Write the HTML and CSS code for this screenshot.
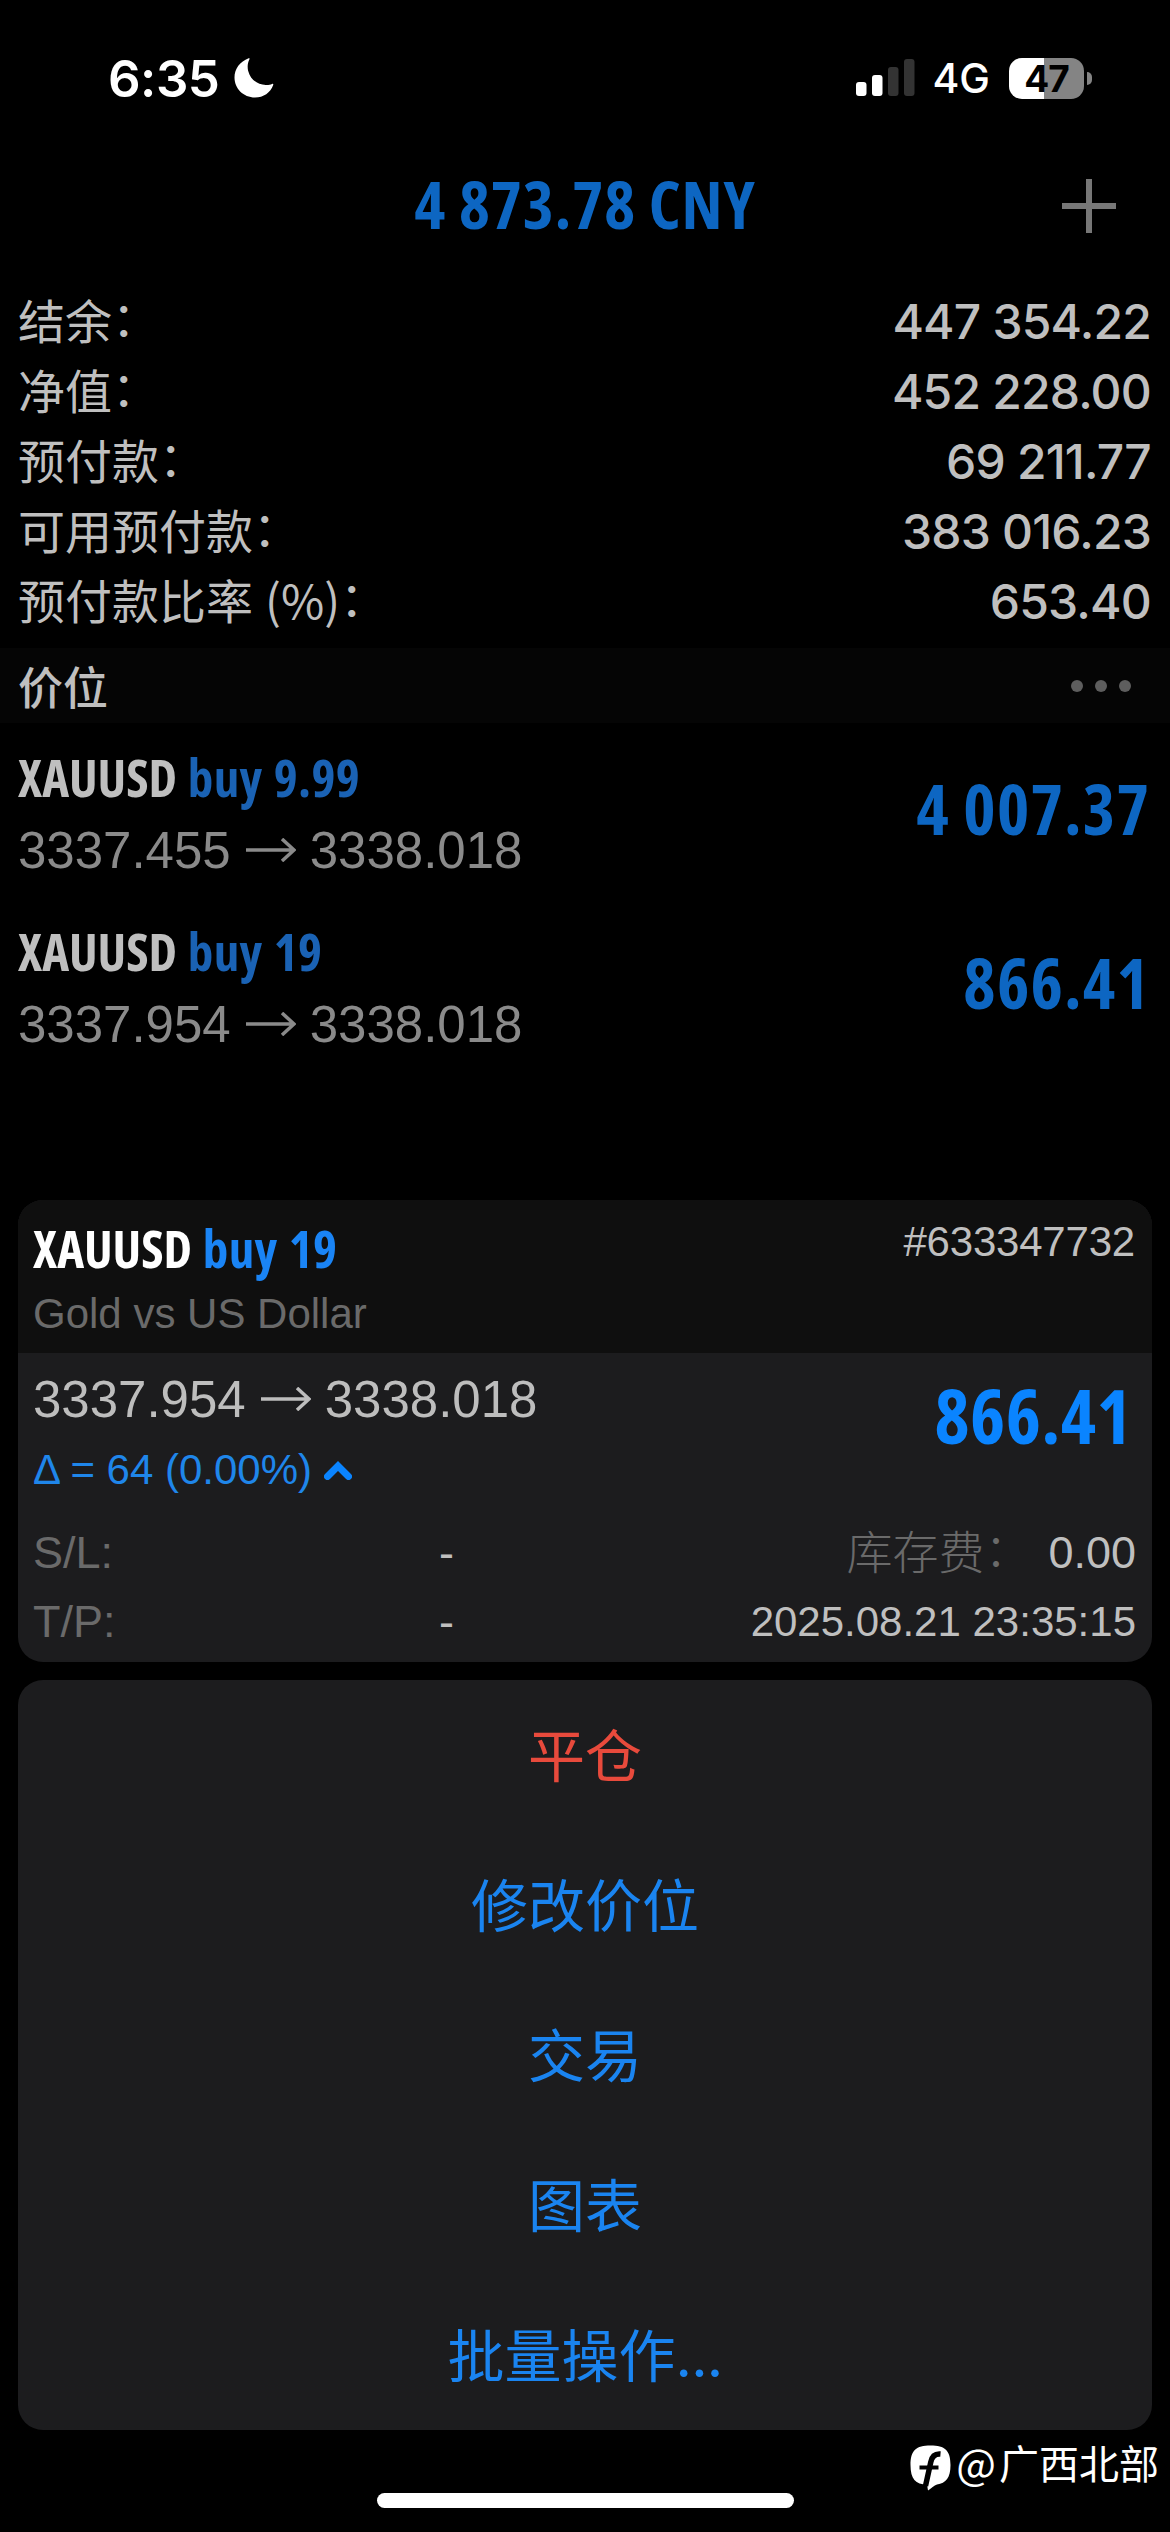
FILE: index.html
```html
<!DOCTYPE html>
<html lang="zh-CN">
<head>
<meta charset="utf-8">
<title>价位</title>
<link rel="stylesheet" href="styles.css">
</head>
<body>
<header class="status">
  <div class="status-left">
    <span class="time">6:35</span>
    <svg class="moon" width="40" height="40" viewBox="0 0 40 40"><path d="M14.6 .3C15.6 -.1 15.8 .5 15.3 1.5C13.6 4.8 13.2 9 14.2 13C16.200 21.500 24 27.400 32.500 27C35 26.900 36.500 26.500 38 25.900C39.200 25.500 39.500 26 39.200 26.900C36.500 34.500 29.500 39.500 21 39.500C9.500 39.500 .5 30.500 .5 19.500C.5 11 6 3.500 14.600 .3Z"/></svg>
  </div>
  <div class="status-right">
    <svg class="signal" width="59" height="38" viewBox="0 0 59 38"><rect x="0" y="23" width="10.500" height="14" rx="3"/><rect x="16" y="16" width="10.500" height="21" rx="3"/><rect class="off" x="32" y="8" width="10.500" height="29" rx="3"/><rect class="off" x="48" y="0" width="10.500" height="37" rx="3"/></svg>
    <span class="network">4G</span>
    <div class="battery"><span>47</span></div>
    <i class="battery-cap"></i>
  </div>
</header>
<nav class="nav">
  <h1 class="cond total">4 873.78 CNY</h1>
  <svg class="plus" width="54" height="54" viewBox="0 0 54 54"><path d="M27 0V54M0 27H54"/></svg>
</nav>
<section class="summary">
  <div class="row"><span>结余<i>：</i></span><b>447 354.22</b></div>
  <div class="row"><span>净值<i>：</i></span><b>452 228.00</b></div>
  <div class="row"><span>预付款<i>：</i></span><b>69 211.77</b></div>
  <div class="row"><span>可用预付款<i>：</i></span><b>383 016.23</b></div>
  <div class="row"><span>预付款比率<em>(%)</em><i>：</i></span><b>653.40</b></div>
</section>
<div class="section-bar"><h2>价位</h2><div class="dots"><i></i><i></i><i></i></div></div>
<section class="positions">
  <div class="position">
    <div>
      <div class="cond name">XAUUSD <span class="side">buy 9.99</span></div>
      <div class="price"><span>3337.455</span><svg width="50" height="24" viewBox="0 0 50 24"><path d="M0 12H48M36 1L48 12L36 23"/></svg><span>3338.018</span></div>
    </div>
    <div class="cond profit">4 007.37</div>
  </div>
  <div class="position">
    <div>
      <div class="cond name">XAUUSD <span class="side">buy 19</span></div>
      <div class="price"><span>3337.954</span><svg width="50" height="24" viewBox="0 0 50 24"><path d="M0 12H48M36 1L48 12L36 23"/></svg><span>3338.018</span></div>
    </div>
    <div class="cond profit">866.41</div>
  </div>
</section>
<section class="card detail">
  <div class="detail-head">
    <div>
      <div class="cond name">XAUUSD <span class="side">buy 19</span></div>
      <div class="subtitle">Gold vs US Dollar</div>
    </div>
    <div class="ticket">#633347732</div>
  </div>
  <div class="detail-main">
    <div>
      <div class="price"><span>3337.954</span><svg width="50" height="24" viewBox="0 0 50 24"><path d="M0 12H48M36 1L48 12L36 23"/></svg><span>3338.018</span></div>
      <div class="delta"><span>Δ = 64 (0.00%)</span><svg width="28" height="19" viewBox="0 0 28 19"><path d="M3.500 15.500L14 5L24.500 15.500"/></svg></div>
    </div>
    <div class="cond profit">866.41</div>
  </div>
  <div class="line"><span class="label">S/L:</span><span class="val">-</span><span class="label cjk">库存费<i>：</i></span><span class="end">0.00</span></div>
  <div class="line"><span class="label">T/P:</span><span class="val">-</span><span class="end date">2025.08.21 23:35:15</span></div>
</section>
<section class="card actions">
  <div class="action danger">平仓</div>
  <div class="action">修改价位</div>
  <div class="action">交易</div>
  <div class="action">图表</div>
  <div class="action">批量操作<span>...</span></div>
</section>
<footer class="footer">
  <div class="watermark">
    <svg width="41" height="46" viewBox="0 0 41 46"><path class="badge" d="M20.500 .5C35 .5 40.500 5.500 40.500 20C40.500 33 36 38 27 39.500C24 40.500 21.500 43 18 45.500L17 39.500C5.500 39.500 .5 34 .5 20C.5 5.500 6 .5 20.500 .5Z"/><path class="mark" d="M30.500 9C24.500 8.500 21.800 12 20.800 17L15.500 41"/><path class="mark bar" d="M9.500 22.500H28.500"/></svg>
    <span class="at">@</span><span>广西北部</span>
  </div>
  <div class="home"></div>
</footer>
</body>
</html>
```
FILE: styles.css
```css
* { box-sizing: border-box; margin: 0; padding: 0; }
html { background: #000; }
body {
  width: 1170px; height: 2532px; overflow: hidden;
  background: #000; color: #bfbfbf;
  font-family: "Liberation Sans", "Noto Sans CJK SC", sans-serif;
  display: flex; flex-direction: column;
}
svg { display: block; flex: none; }
i, em { font-style: normal; }
.cond {
  font-family: "Open Sans", sans-serif; font-stretch: 75%; font-weight: 700;
  white-space: pre;
}

.status { height: 156px; padding: 0 78px 0 108px; display: flex; justify-content: space-between; align-items: center; color: #fff; font-family: Inter, sans-serif; }
.status-left, .status-right { display: flex; align-items: center; }
.time { font-size: 51px; font-weight: 600; letter-spacing: -0.5px; }
.moon { margin-left: 15px; fill: #fff; }
.signal { fill: #fff; margin-right: 17px; }
.signal .off { fill: #333; }
.network { font-size: 41px; font-weight: 500; margin-right: 19px; }
.battery { width: 75px; height: 41px; border-radius: 13px; background: linear-gradient(90deg, #fff 35px, #848484 35px); color: #000; display: flex; align-items: center; justify-content: center; font-size: 37px; font-weight: 700; letter-spacing: -1px; }
.battery-cap { width: 5px; height: 13px; margin-left: 3px; border-radius: 0 6px 6px 0; background: #848484; }

.nav { height: 100px; display: grid; grid-template-columns: 1fr auto 1fr; align-items: center; padding: 0 54px; }
.total { grid-column: 2; font-size: 66px; line-height: 94px; height: 100px; letter-spacing: 0.9px; color: #0d66c2; }
.plus { justify-self: end; stroke: #777; stroke-width: 6; }

.summary { padding: 31px 19px 0 18px; height: 392px; }
.row { height: 70px; line-height: 70px; display: flex; justify-content: space-between; font-size: 47px; font-family: "Noto Sans CJK SC", sans-serif; }
.row span { line-height: 64px; }
.row i, .label i { line-height: 1; vertical-align: 3px; }
.row em { font-size: 47px; margin-left: 12px; }
.row b { font-family: Inter, sans-serif; font-weight: 500; font-size: 48px; letter-spacing: -0.8px; }

.section-bar { height: 75px; background: #050505; display: flex; justify-content: space-between; align-items: center; padding: 0 39px 0 18px; }
.section-bar h2 { font: 500 45px/70px "Noto Sans CJK SC", sans-serif; }
.dots { display: flex; gap: 12px; }
.dots i { width: 12px; height: 12px; border-radius: 50%; background: #5e5e5e; }

.positions { height: 477px; }
.position { height: 174px; padding: 19px 20px 0 18px; display: flex; justify-content: space-between; }
.name { font-size: 51px; line-height: 70px; height: 72px; word-spacing: 1.5px; }
.side { color: #1a62b4; letter-spacing: 0.4px; }
.price { height: 72px; line-height: 73px; font-size: 51px; color: #8a8a8a; display: flex; align-items: center; }
.price svg { margin: 0 14px 0 15px; }
.price path { fill: none; stroke: currentColor; stroke-width: 3.500; color: #8a8a8a; }
.position .profit { font-size: 69px; line-height: 133px; letter-spacing: 1.2px; color: #0d66c2; }

.card { margin: 0 18px; border-radius: 25px; background: #1c1c1e; overflow: hidden; flex: none; }
.detail { height: 462px; }
.detail-head { height: 153px; background: #0f0f0f; padding: 13px 17px 0 15px; display: flex; justify-content: space-between; }
.detail .name { color: #fff; }
.detail .side { color: #1a84f5; }
.subtitle { font-size: 42px; line-height: 57px; color: #6a6a6a; }
.ticket { font-size: 42px; line-height: 57px; letter-spacing: -0.2px; }
.detail-main { height: 165px; padding: 10px 20px 0 15px; display: flex; justify-content: space-between; }
.detail .price, .detail .price path { color: #bdbdbd; }
.delta { font-size: 42px; line-height: 70px; color: #1f86ea; display: flex; align-items: center; }
.delta svg { margin-left: 12px; }
.delta path { fill: none; stroke: #0a84ff; stroke-width: 7; stroke-linecap: round; }
.detail .profit { font-size: 75px; line-height: 104px; letter-spacing: 0.4px; color: #0a84ff; }
.line { height: 69px; line-height: 69px; font-size: 45px; padding: 0 16px 0 15px; display: grid; grid-template-columns: 406px 1fr auto auto; }
.label { color: #6a6a6a; }
.label.cjk { font: 300 46px/62px "Noto Sans CJK SC", sans-serif; margin-right: 18px; }
.end { text-align: right; }
.date { grid-column: 3 / 5; font-size: 42px; }

.actions { margin-top: 18px; height: 750px; }
.action { height: 150px; text-align: center; font: 400 57px/145px "Noto Sans CJK SC", sans-serif; color: #1a84f0; }
.action.danger { color: #e84a3c; }
.action span { font-family: Inter, sans-serif; letter-spacing: -0.8px; }

.footer { flex: 1; color: #fff; }
.watermark { height: 62px; display: flex; justify-content: flex-end; align-items: center; padding-right: 11px; padding-top: 2px; font: 400 40px/50px "Noto Sans CJK SC", sans-serif; }
.watermark svg { margin-top: 11px; }
.watermark .badge { fill: #fff; }
.watermark .mark { fill: none; stroke: #000; stroke-width: 5.500; }
.watermark .mark.bar { stroke-width: 4; }
.at { margin: 0 3px 0 5px; font-size: 42px; }
.home { width: 417px; height: 15px; margin: 1px auto 0; border-radius: 8px; background: #fff; }
```
